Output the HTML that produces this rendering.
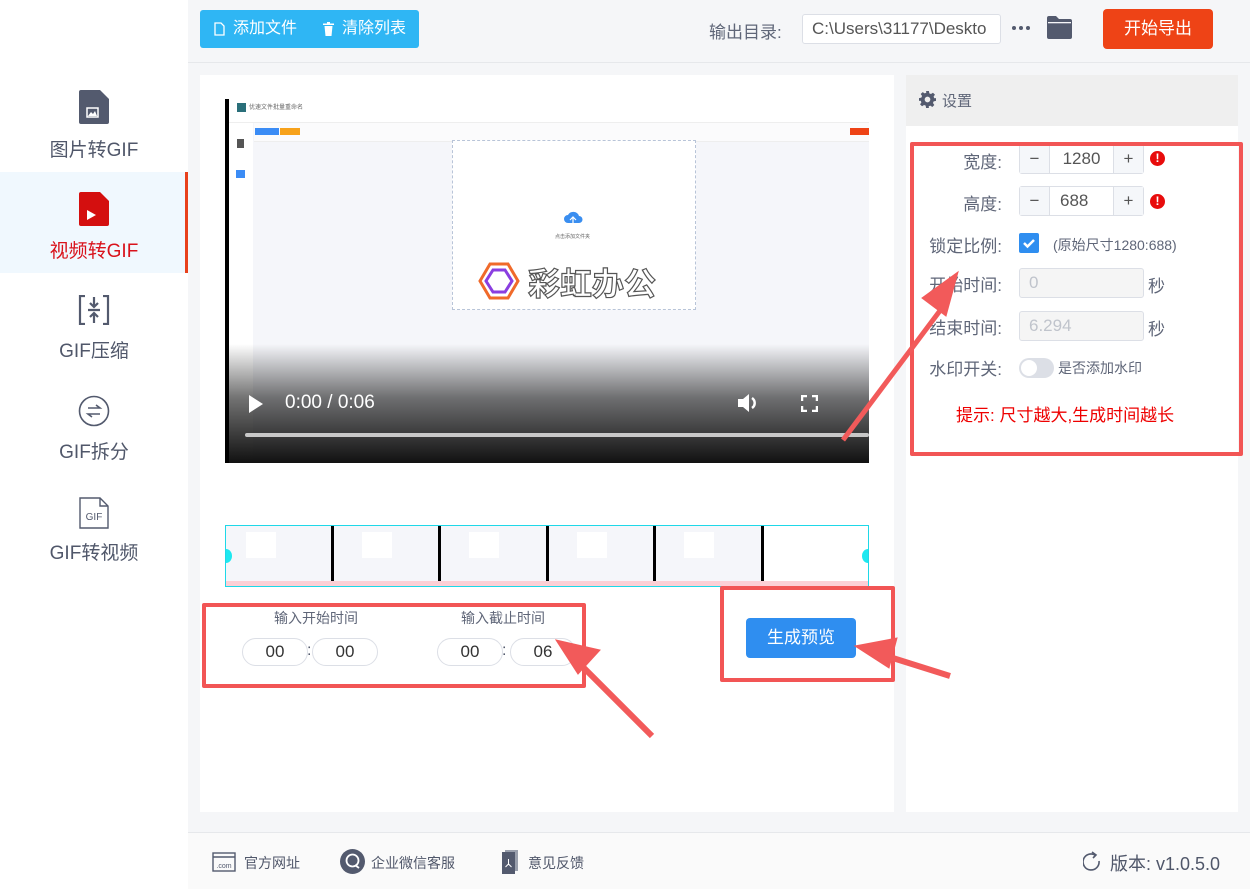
<!DOCTYPE html>
<html><head><meta charset="utf-8"><style>
*{box-sizing:border-box;margin:0;padding:0}
body{width:1250px;height:889px;position:relative;overflow:hidden;background:#f5f6f8;font-family:"Liberation Sans","Noto Sans CJK SC",sans-serif;color:#50576a}
.abs{position:absolute}
.side{left:0;top:0;width:188px;height:889px;background:#fff}
.nav{position:absolute;left:0;width:188px;height:100px;text-align:center;font-size:19px;color:#50576a}
.nav .lab{position:absolute;left:0;right:0;top:62px}
.lbl{position:absolute;font-size:17px;color:#5f6678;text-align:right;width:82px}
.box{position:absolute;border:4px solid #f25555;border-radius:2px}
.num{position:absolute;height:30px;border:1px solid #dcdfe6;border-radius:3px;background:#fff;display:flex;font-size:17px;color:#555}
.num span{display:flex;align-items:center;justify-content:center}
.pill{position:absolute;width:66px;height:28px;border:1px solid #dcdfe6;border-radius:14px;background:#fff;text-align:center;line-height:26px;font-size:17px;color:#333}
</style></head><body>
<div class="abs side"></div>
<div class="nav" style="top:85px"><svg class="abs" style="left:79px;top:5px" width="30" height="34" viewBox="0 0 30 34"><path d="M2 0h19l9 9v23a2 2 0 0 1-2 2H2a2 2 0 0 1-2-2V2a2 2 0 0 1 2-2z" fill="#535a6e"/><rect x="8" y="18" width="11" height="9" fill="none" stroke="#fff" stroke-width="1.5"/><path d="M9 26l3-4 2 2 2-3 2 5z" fill="#fff"/></svg><div class="lab" style="top:50px">图片转GIF</div></div>
<div class="abs" style="left:0;top:172px;width:188px;height:101px;background:#f0f8fe;border-right:3px solid #e8411c"></div>
<div class="nav" style="top:186px;color:#d9121b"><svg class="abs" style="left:79px;top:6px" width="30" height="34" viewBox="0 0 30 34"><path d="M2 0h19l9 9v23a2 2 0 0 1-2 2H2a2 2 0 0 1-2-2V2a2 2 0 0 1 2-2z" fill="#d40f0f"/><path d="M8 18l9 5-9 5z" fill="#fff"/></svg><div class="lab" style="top:50px">视频转GIF</div></div>
<div class="nav" style="top:290px"><svg class="abs" style="left:78px;top:5px" width="32" height="30" viewBox="0 0 32 30" fill="none" stroke="#535a6e" stroke-width="2.2"><path d="M7 1H2v28h5M25 1h5v28h-5M16 2v10M12 8l4 4 4-4M10 15h12M16 28V18M12 22l4-4 4 4"/></svg><div class="lab" style="top:46px">GIF压缩</div></div>
<div class="nav" style="top:392px"><svg class="abs" style="left:78px;top:3px" width="32" height="32" viewBox="0 0 32 32" fill="none" stroke="#535a6e" stroke-width="1.6"><circle cx="16" cy="16" r="14.5"/><path d="M10 13h12l-4-3M22 19H10l4 3"/></svg><div class="lab" style="top:45px">GIF拆分</div></div>
<div class="nav" style="top:494px"><svg class="abs" style="left:79px;top:3px" width="30" height="32" viewBox="0 0 30 32"><path d="M1 1h20l8 8v22H1z" fill="#fff" stroke="#535a6e" stroke-width="1.4"/><path d="M21 1v8h8" fill="none" stroke="#535a6e" stroke-width="1.4"/><text x="15" y="23" font-size="10" text-anchor="middle" fill="#535a6e" font-family="Liberation Sans">GIF</text></svg><div class="lab" style="top:44px">GIF转视频</div></div>

<div class="abs" style="left:188px;top:62px;width:1062px;height:1px;background:#e6e8eb"></div>
<div class="abs" style="left:200px;top:10px;width:219px;height:38px;background:#2fb6f4;border-radius:3px;color:#fff;font-size:16px;line-height:38px">
<svg class="abs" style="left:14px;top:12px" width="11" height="14" viewBox="0 0 11 14" fill="none" stroke="#fff" stroke-width="1.3"><path d="M1 1h6l3 3v9H1z"/></svg><span class="abs" style="left:33px">添加文件</span>
<svg class="abs" style="left:123px;top:12px" width="11" height="14" viewBox="0 0 11 14" fill="#fff"><rect x="0" y="1.5" width="11" height="1.5"/><rect x="4" y="0" width="3" height="2"/><path d="M1.5 4h8l-1 10h-6z"/></svg><span class="abs" style="left:142px">清除列表</span></div>
<div class="abs" style="left:709px;top:18px;font-size:17px;color:#5f6678">输出目录:</div>
<div class="abs" style="left:802px;top:14px;width:199px;height:30px;background:#fff;border:1px solid #dcdfe6;border-radius:3px;font-size:17px;line-height:28px;padding-left:9px;color:#555;overflow:hidden;white-space:nowrap">C:\Users\31177\Deskto</div>
<svg class="abs" style="left:1011px;top:25px" width="20" height="6" viewBox="0 0 20 6" fill="#535a6e"><circle cx="3" cy="3" r="2"/><circle cx="10" cy="3" r="2"/><circle cx="17" cy="3" r="2"/></svg>
<svg class="abs" style="left:1047px;top:16px" width="25" height="23" viewBox="0 0 25 23"><path d="M0 2a2 2 0 0 1 2-2h7l3 3h11a2 2 0 0 1 2 2v16a2 2 0 0 1-2 2H2a2 2 0 0 1-2-2z" fill="#535a6e"/><rect x="1" y="6" width="23" height="1.3" fill="#f5f6f8"/></svg>
<div class="abs" style="left:1103px;top:9px;width:110px;height:40px;background:#ee4316;border-radius:4px;color:#fff;font-size:17px;text-align:center;line-height:40px">开始导出</div>

<div class="abs" style="left:200px;top:75px;width:694px;height:737px;background:#fff"></div>
<div class="abs" style="left:225px;top:99px;width:644px;height:364px;background:#f5f6fa;overflow:hidden">
 <div class="abs" style="left:0;top:0;width:4px;height:364px;background:#000"></div>
 <div class="abs" style="left:4px;top:0;width:640px;height:24px;background:#fff;border-bottom:1px solid #eee"></div>
 <div class="abs" style="left:12px;top:4px;width:9px;height:9px;background:#2a6f7a"></div>
 <div class="abs" style="left:24px;top:3px;font-size:6px;color:#666">优速文件批量重命名</div>
 <div class="abs" style="left:4px;top:24px;width:24px;height:340px;background:#fff"></div>
 <div class="abs" style="left:29px;top:24px;width:615px;height:19px;background:#fbfbfc;border-bottom:1px solid #eee"></div>
 <div class="abs" style="left:30px;top:29px;width:24px;height:7px;background:#3b8cf5"></div>
 <div class="abs" style="left:55px;top:29px;width:20px;height:7px;background:#f7a21b"></div>
 <div class="abs" style="left:625px;top:29px;width:19px;height:7px;background:#ee4316"></div>
 <div class="abs" style="left:12px;top:40px;width:7px;height:9px;background:#555"></div>
 <div class="abs" style="left:11px;top:71px;width:9px;height:8px;background:#3b8cf5"></div>
 <div class="abs" style="left:227px;top:41px;width:244px;height:170px;background:#fff;border:1px dashed #b8c4d8"></div>
 <svg class="abs" style="left:338px;top:110px" width="20" height="20" viewBox="0 0 20 20"><path d="M5 14a4 4 0 0 1 0-8 6 6 0 0 1 11 1 3.5 3.5 0 0 1 0 7z" fill="#3a8ef0"/><path d="M10 19V8M7 11l3-3 3 3" stroke="#fff" fill="none" stroke-width="1.2"/></svg>
 <div class="abs" style="left:330px;top:134px;font-size:5px;color:#666">点击添加文件夹</div>
 <svg class="abs" style="left:253px;top:162px" width="42" height="40" viewBox="0 0 42 40" fill="none" stroke-width="3"><path d="M12 3h18l10 17-10 17H12L2 20z" stroke="#f06a2a"/><path d="M15 9h12l7 11-7 11H15L8 20z" stroke="#8a3ee0"/></svg>
 <div class="abs" style="left:303px;top:160px;font-size:32px;color:#fff;-webkit-text-stroke:1.2px #555;font-weight:bold">彩虹办公</div>
 <div class="abs" style="left:4px;top:245px;width:640px;height:119px;background:linear-gradient(rgba(0,0,0,0),rgba(0,0,0,.55) 45%,#111)"></div>
 <svg class="abs" style="left:24px;top:296px" width="14" height="18" viewBox="0 0 14 18"><path d="M0 0l14 9-14 9z" fill="#fff"/></svg>
 <div class="abs" style="left:60px;top:293px;font-size:19px;color:#fff">0:00 / 0:06</div>
 <svg class="abs" style="left:513px;top:293px" width="22" height="22" viewBox="0 0 22 22" fill="#fff"><path d="M0 7h5l6-5v18l-6-5H0z"/><path d="M14 6a6 6 0 0 1 0 10" stroke="#fff" stroke-width="2.5" fill="none"/></svg>
 <svg class="abs" style="left:576px;top:296px" width="17" height="17" viewBox="0 0 17 17" fill="none" stroke="#fff" stroke-width="2.5"><path d="M1 6V1h5M11 1h5v5M16 11v5h-5M6 16H1v-5"/></svg>
 <div class="abs" style="left:20px;top:334px;width:624px;height:4px;background:#c8c8c8;border-radius:2px"></div>
</div>

<div class="abs" style="left:225px;top:525px;width:644px;height:62px;border:1px solid #1ed8e8;background:#f5f6fa;overflow:hidden;display:flex">
 <div style="flex:1;border-right:3px solid #000;position:relative"><div class="abs" style="left:20px;top:6px;width:30px;height:26px;background:#fff"></div></div>
 <div style="flex:1;border-right:3px solid #000;position:relative"><div class="abs" style="left:28px;top:6px;width:30px;height:26px;background:#fff"></div></div>
 <div style="flex:1;border-right:3px solid #000;position:relative"><div class="abs" style="left:28px;top:6px;width:30px;height:26px;background:#fff"></div></div>
 <div style="flex:1;border-right:3px solid #000;position:relative"><div class="abs" style="left:28px;top:6px;width:30px;height:26px;background:#fff"></div></div>
 <div style="flex:1;border-right:3px solid #000;position:relative"><div class="abs" style="left:28px;top:6px;width:30px;height:26px;background:#fff"></div></div>
 <div style="flex:1;position:relative;background:#fff"></div>
 <div class="abs" style="left:0;bottom:0;width:644px;height:5px;background:#fcd0d6"></div>
 <div class="abs" style="left:-6px;top:23px;width:12px;height:14px;border-radius:50%;background:#1ee8f0"></div>
 <div class="abs" style="left:636px;top:23px;width:12px;height:14px;border-radius:50%;background:#1ee8f0"></div>
</div>

<div class="abs" style="left:274px;top:608px;font-size:14px;color:#5f6678">输入开始时间</div>
<div class="abs" style="left:461px;top:608px;font-size:14px;color:#5f6678">输入截止时间</div>
<div class="pill" style="left:242px;top:638px">00</div><div class="abs" style="left:307px;top:642px;font-size:16px">:</div><div class="pill" style="left:312px;top:638px">00</div>
<div class="pill" style="left:437px;top:638px">00</div><div class="abs" style="left:502px;top:642px;font-size:16px">:</div><div class="pill" style="left:510px;top:638px">06</div>
<div class="abs" style="left:746px;top:618px;width:110px;height:40px;background:#2f8ef0;border-radius:4px;color:#fff;font-size:17px;text-align:center;line-height:40px">生成预览</div>

<div class="abs" style="left:906px;top:75px;width:332px;height:51px;background:#efefef"></div>
<svg class="abs" style="left:919px;top:91px" width="17" height="17" viewBox="0 0 24 24" fill="#535a6e"><path d="M10 0h4l.6 3.3 2.3 1 2.8-1.9 2.8 2.8-1.9 2.8 1 2.3L24 10v4l-3.3.6-1 2.3 1.9 2.8-2.8 2.8-2.8-1.9-2.3 1L14 24h-4l-.6-3.3-2.3-1-2.8 1.9-2.8-2.8 1.9-2.8-1-2.3L0 14v-4l3.3-.6 1-2.3-1.9-2.8 2.8-2.8 2.8 1.9 2.3-1zM12 8a4 4 0 1 0 0 8 4 4 0 0 0 0-8z"/></svg>
<div class="abs" style="left:942px;top:90px;font-size:15px;color:#5f6678">设置</div>
<div class="abs" style="left:906px;top:126px;width:332px;height:686px;background:#fff"></div>
<div class="lbl" style="left:920px;top:148px">宽度:</div>
<div class="num" style="left:1019px;top:144px;width:125px"><span style="width:30px;border-right:1px solid #dcdfe6;background:#f5f7fa">−</span><span style="width:63px">1280</span><span style="width:30px;border-left:1px solid #dcdfe6;background:#f5f7fa">+</span></div>
<div class="abs" style="left:1150px;top:151px;width:15px;height:15px;border-radius:50%;background:#e80c0c;color:#fff;font-size:12px;font-weight:bold;text-align:center;line-height:15px">!</div>
<div class="lbl" style="left:920px;top:190px">高度:</div>
<div class="num" style="left:1019px;top:186px;width:125px"><span style="width:30px;border-right:1px solid #dcdfe6;background:#f5f7fa">−</span><span style="width:63px;justify-content:flex-start;padding-left:10px">688</span><span style="width:30px;border-left:1px solid #dcdfe6;background:#f5f7fa">+</span></div>
<div class="abs" style="left:1150px;top:194px;width:15px;height:15px;border-radius:50%;background:#e80c0c;color:#fff;font-size:12px;font-weight:bold;text-align:center;line-height:15px">!</div>
<div class="lbl" style="left:920px;top:232px">锁定比例:</div>
<div class="abs" style="left:1019px;top:233px;width:20px;height:20px;background:#2f8ef0;border-radius:2px"><svg width="20" height="20" viewBox="0 0 20 20"><path d="M5 10l3.5 3.5L15 7" stroke="#fff" stroke-width="2.5" fill="none"/></svg></div>
<div class="abs" style="left:1053px;top:235px;font-size:14px;color:#5f6678">(原始尺寸1280:688)</div>
<div class="lbl" style="left:920px;top:271px">开始时间:</div>
<div class="abs" style="left:1019px;top:268px;width:125px;height:30px;background:#f5f5f5;border:1px solid #dcdfe6;border-radius:3px;font-size:17px;color:#c0c4cc;line-height:28px;padding-left:9px">0</div>
<div class="abs" style="left:1148px;top:272px;font-size:17px;color:#5f6678">秒</div>
<div class="lbl" style="left:920px;top:314px">结束时间:</div>
<div class="abs" style="left:1019px;top:311px;width:125px;height:30px;background:#f5f5f5;border:1px solid #dcdfe6;border-radius:3px;font-size:17px;color:#c0c4cc;line-height:28px;padding-left:9px">6.294</div>
<div class="abs" style="left:1148px;top:315px;font-size:17px;color:#5f6678">秒</div>
<div class="lbl" style="left:920px;top:355px">水印开关:</div>
<div class="abs" style="left:1019px;top:358px;width:35px;height:20px;background:#dcdfe6;border-radius:10px"><div class="abs" style="left:2px;top:2px;width:16px;height:16px;border-radius:50%;background:#fff"></div></div>
<div class="abs" style="left:1058px;top:358px;font-size:14px;color:#5f6678">是否添加水印</div>
<div class="abs" style="left:956px;top:401px;font-size:17px;color:#e00">提示: 尺寸越大,生成时间越长</div>

<div class="box" style="left:910px;top:142px;width:333px;height:314px"></div>
<div class="box" style="left:202px;top:603px;width:384px;height:85px"></div>
<div class="box" style="left:720px;top:586px;width:175px;height:96px"></div>
<svg class="abs" style="left:0;top:0" width="1250" height="889" viewBox="0 0 1250 889">
<g fill="#f25a5a" stroke="#f25a5a">
<path d="M843 440L948 300" stroke-width="5"/><path d="M958 272l-12 44-24-18z"/>
<path d="M652 736L578 662" stroke-width="6"/><path d="M556 640l44 10-22 24z"/>
<path d="M950 676L880 654" stroke-width="6"/><path d="M855 646l42-8-8 30z"/>
</g></svg>

<div class="abs" style="left:188px;top:832px;width:1062px;height:57px;background:#fafafa;border-top:1px solid #e6e8eb"></div>
<svg class="abs" style="left:212px;top:852px" width="24" height="20" viewBox="0 0 24 20" fill="none" stroke="#535a6e" stroke-width="1.4"><rect x="1" y="1" width="22" height="18"/><path d="M1 5h22"/><text x="12" y="16" font-size="7" text-anchor="middle" fill="#535a6e" stroke="none" font-family="Liberation Sans">.com</text></svg>
<div class="abs" style="left:244px;top:853px;font-size:14px;color:#50576a">官方网址</div>
<svg class="abs" style="left:340px;top:849px" width="25" height="25" viewBox="0 0 25 25"><circle cx="12.5" cy="12.5" r="12.5" fill="#535a6e"/><circle cx="12.5" cy="11.5" r="6" fill="none" stroke="#fff" stroke-width="1.8"/><path d="M15 16l4 3" stroke="#fff" stroke-width="1.8"/></svg>
<div class="abs" style="left:371px;top:853px;font-size:14px;color:#50576a">企业微信客服</div>
<svg class="abs" style="left:502px;top:850px" width="16" height="24" viewBox="0 0 16 24"><rect x="3" y="0" width="13" height="21" fill="#9aa0ad"/><rect x="0" y="2" width="13" height="22" fill="#535a6e"/><path d="M6.5 9v6M3.5 17l3-3 3 3" stroke="#fff" fill="none"/></svg>
<div class="abs" style="left:528px;top:853px;font-size:14px;color:#50576a">意见反馈</div>
<svg class="abs" style="left:1083px;top:851px" width="18" height="22" viewBox="0 0 18 22" fill="none" stroke="#535a6e" stroke-width="1.6"><path d="M12 4a8 8 0 1 0 4 6"/><path d="M9 1l4 3-3 3"/></svg>
<div class="abs" style="left:1110px;top:850px;font-size:18px;color:#50576a">版本: v1.0.5.0</div>
</body></html>
